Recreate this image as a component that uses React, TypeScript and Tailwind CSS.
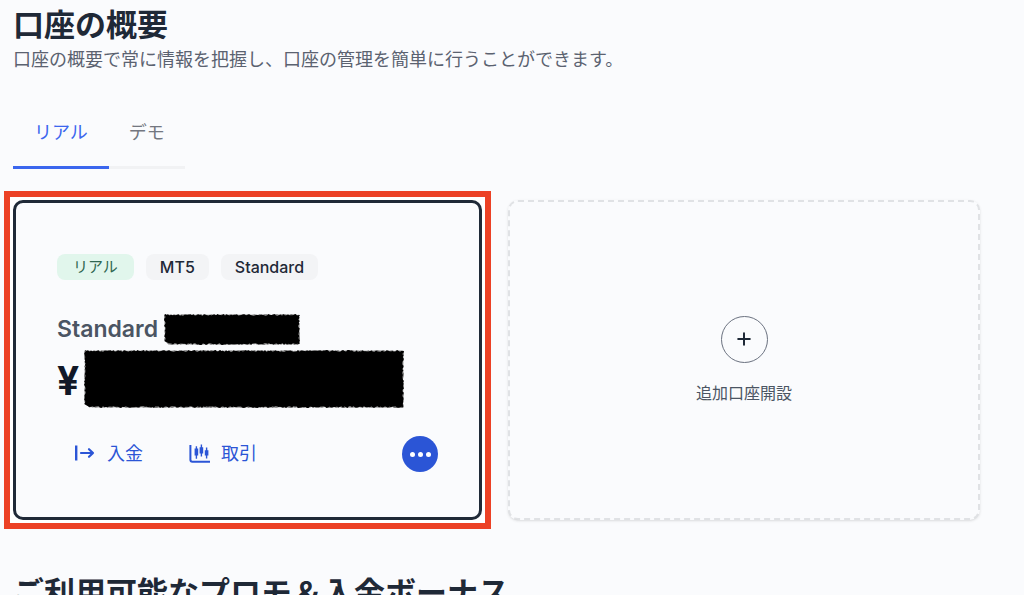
import { Plus } from "lucide-react";

type RedactionProps = { width: number; height: number; label: string };

// Marker stroke with ragged edges; the noise is deterministic so it renders the same every time.
function roughEdge(width: number, height: number, seed: number, spread: number) {
  let state = seed;
  const noise = () => {
    state = (state * 16807) % 2147483647;
    return (state / 2147483647) * spread;
  };
  const points: string[] = [];
  for (let x = 1; x < width - 1; x += 1.5) points.push(`${x},${noise()}`);
  for (let y = 1; y < height - 1; y += 1.5) points.push(`${width - noise()},${y}`);
  for (let x = width - 1; x > 4; x -= 1.5) points.push(`${x},${height - noise()}`);
  for (let y = height - 4; y > 1; y -= 1.5) points.push(`${noise()},${y}`);
  return points.join(" ");
}

function Redaction({ width, height, label }: RedactionProps) {
  return (
    <svg
      width={width}
      height={height}
      viewBox={`0 0 ${width} ${height}`}
      role="img"
      aria-label={label}
      className="shrink-0"
    >
      <polygon points={roughEdge(width, height, 91, 1)} fill="#777" />
      <polygon points={roughEdge(width, height, 4177, 2)} fill="#000" />
    </svg>
  );
}

function DepositIcon() {
  return (
    <svg width="21" height="18" viewBox="0 0 21 18" fill="none" stroke="currentColor" strokeWidth="2.2" aria-hidden="true">
      <path d="M2.2 0.5v15" strokeWidth="2.4" />
      <path d="M7 8h12M15 4.2 19 8 15 11.8" strokeLinejoin="round" strokeLinecap="round" />
    </svg>
  );
}

function TradeIcon() {
  return (
    <svg width="22" height="20" viewBox="0 0 22 20" fill="none" stroke="currentColor" aria-hidden="true">
      <path d="M1.4 1v14.7q0 2 2 2H21" strokeWidth="2" />
      <path d="M7.4 2.2v12.6M12.4 .6v12M17.6 3.6v11" strokeWidth="1.4" />
      <path d="M7.4 4.6v7M12.4 3.2v6.4M17.6 6.2v5.4" strokeWidth="3.6" strokeLinecap="butt" />
    </svg>
  );
}

function Badge({ children, tone }: { children: string; tone: "green" | "gray" }) {
  return (
    <span
      className={
        tone === "green"
          ? "rounded-lg bg-[#e1f6ec] px-4 text-[15px] leading-[26px] text-[#2f6650]"
          : "rounded-lg bg-[#f3f4f6] px-3.5 text-[16px] font-medium leading-[26px] text-[#1f2937]"
      }
    >
      {children}
    </span>
  );
}

function AccountCard() {
  return (
    <div className="bg-white ring-3 ring-white outline-6 outline-offset-3 outline-[#ec4125]">
      <article className="rounded-[10px] border-3 border-[#1f2937] bg-[#fafbfd] px-[41px] pb-[45px] pt-[51px]">
        <div className="flex gap-3">
          <Badge tone="green">リアル</Badge>
          <Badge tone="gray">MT5</Badge>
          <Badge tone="gray">Standard</Badge>
        </div>
        <div className="mt-[34px] flex items-center gap-1.5 text-[23px] font-semibold leading-[31px] text-[#4b5563]">
          <span>Standard</span>
          <Redaction width={136} height={31} label="口座番号" />
        </div>
        <div className="mt-[5px] flex items-center gap-[5px] text-[39px] font-bold leading-[54px] text-[#111827]">
          <span className="pt-1">¥</span>
          <Redaction width={320} height={58} label="残高" />
        </div>
        <div className="mt-7 flex items-center text-[18px] leading-9 text-[#2b55d6]">
          <a href="#deposit" className="flex items-center gap-3 pl-[17px]">
            <DepositIcon />
            入金
          </a>
          <a href="#trade" className="ml-[46px] flex items-center gap-2.5">
            <TradeIcon />
            取引
          </a>
          <button
            type="button"
            aria-label="その他"
            className="ml-auto flex size-9 items-center justify-center gap-[3px] rounded-full bg-[#2b55d6]"
          >
            <span className="size-[5px] rounded-full bg-white" />
            <span className="size-[5px] rounded-full bg-white" />
            <span className="size-[5px] rounded-full bg-white" />
          </button>
        </div>
      </article>
    </div>
  );
}

export default function App() {
  return (
    <main className="h-screen overflow-hidden bg-[#fafbfd] pl-[13px] pr-11 pt-1 font-['Inter','Noto_Sans_CJK_JP',sans-serif]" lang="ja">
      <h1 className="text-[31px] font-bold leading-[42px] text-[#1f2937]">口座の概要</h1>
      <p className="text-[18px] leading-[27px] text-[#5b6270]">
        口座の概要で常に情報を把握し、口座の管理を簡単に行うことができます。
      </p>

      <div role="tablist" className="mt-10 flex text-[18px] leading-[27px]">
        <button
          type="button"
          role="tab"
          aria-selected="true"
          className="border-b-3 border-[#3b66ee] px-[21px] pb-5 pt-1.5 text-[#3b66ee]"
        >
          リアル
        </button>
        <button
          type="button"
          role="tab"
          aria-selected="false"
          className="border-b-3 border-[#f1f2f4] px-5 pb-5 pt-1.5 text-[#737780]"
        >
          デモ
        </button>
      </div>

      <section className="mt-[31px] grid grid-cols-[469fr_472fr] gap-[26px]">
        <AccountCard />
        <button
          type="button"
          className="flex flex-col items-center justify-center rounded-[10px] border-2 border-dashed border-[#e0e2e5] bg-[#fafbfd] shadow-sm"
        >
          <span className="flex size-[47px] items-center justify-center rounded-full border border-[#6b7280] text-[#1f2937]">
            <Plus size={20} strokeWidth={2.4} />
          </span>
          <span className="mt-[18px] text-[16px] leading-6 text-[#4b5563]">追加口座開設</span>
        </button>
      </section>

      <h2 className="mt-[51px] text-[31px] font-bold leading-[44px] text-[#1f2937]">
        ご利用可能なプロモ＆入金ボーナス
      </h2>
    </main>
  );
}
